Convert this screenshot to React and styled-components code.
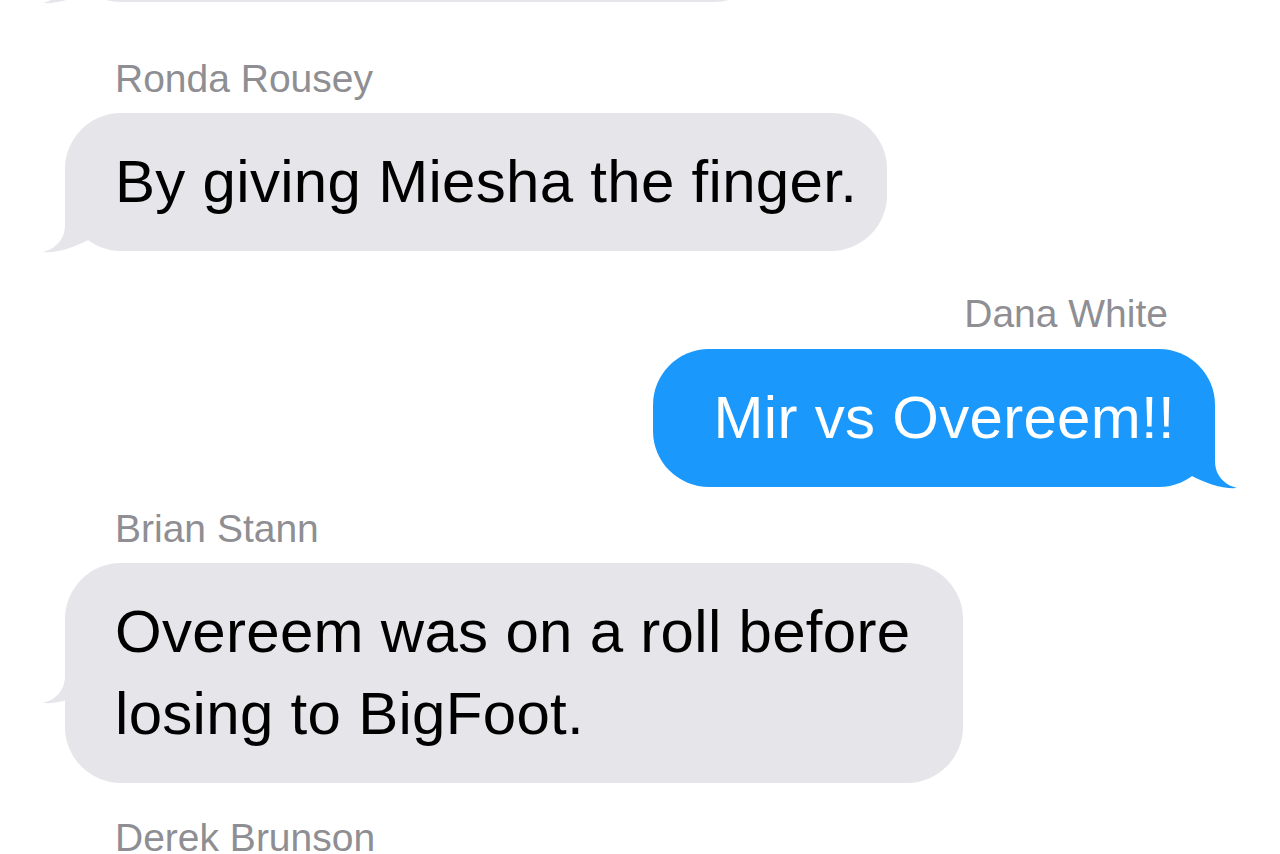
import React from "react";
import styled, { createGlobalStyle } from "styled-components";

const GlobalStyle = createGlobalStyle`
  html, body { margin: 0; padding: 0; background: #ffffff; }
  body {
    font-family: "Liberation Sans", Arial, Helvetica, sans-serif;
    -webkit-font-smoothing: antialiased;
  }
`;

const Viewport = styled.div`
  height: 100vh;
  overflow: hidden;
  background: #ffffff;
`;

/* the conversation is scrolled: the previous bubble sits just above the top edge */
const Thread = styled.div`
  display: flex;
  flex-direction: column;
  padding: 0 65px;
  margin-top: -136px;
`;

const Group = styled.div`
  display: flex;
  flex-direction: column;
  align-items: ${(p) => (p.$sent ? "flex-end" : "flex-start")};
  margin-top: ${(p) => p.$mt}px;
`;

const Sender = styled.div`
  font-size: 39px;
  line-height: 46px;
  color: #8e8e93;
  padding: 0 47px 0 50px;
  margin-bottom: 11.5px;
  white-space: nowrap;
`;

const Bubble = styled.div`
  position: relative;
  box-sizing: border-box;
  max-width: 898px;
  width: ${(p) => (p.$width ? `${p.$width}px` : "auto")};
  padding: ${(p) => (p.$sent ? "28px 40px 28px 60px" : "28px 30px 28px 50px")};
  border-radius: 56px;
  background: ${(p) => (p.$sent ? "#1a98fc" : "#e5e5ea")};
  color: ${(p) => (p.$sent ? "#ffffff" : "#000000")};
  font-size: 60px;
  line-height: 82px;
  letter-spacing: 0.3px;
`;

const Text = styled.span`
  position: relative;
  z-index: 1;
`;

const TailSvg = styled.svg`
  position: absolute;
  bottom: ${(p) => -2 + (p.$offset || 0)}px;
  ${(p) => (p.$sent ? "right: -22px; transform: scaleX(-1);" : "left: -22px;")}
  width: 48px;
  height: 62px;
  overflow: visible;
`;

function Tail({ sent, offset, color }) {
  return (
    <TailSvg $sent={sent} $offset={offset} viewBox="0 0 48 62" aria-hidden="true">
      <path
        d="M22 0 L22 34 C22 49 12 58 0 61 C14 62 30 57 47 48 L47 0 Z"
        fill={color}
      />
    </TailSvg>
  );
}

function Message({ sent, width, tailOffset, children }) {
  return (
    <Bubble $sent={sent} $width={width}>
      <Tail sent={sent} offset={tailOffset} color={sent ? "#1a98fc" : "#e5e5ea"} />
      <Text>{children}</Text>
    </Bubble>
  );
}

export default function App() {
  return (
    <>
      <GlobalStyle />
      <Viewport>
        <Thread>
          <Group $mt={0}>
            <Message width={705}>{"\u00a0"}</Message>
          </Group>

          <Group $mt={53.5}>
            <Sender>Ronda Rousey</Sender>
            <Message>By giving Miesha the finger.</Message>
          </Group>

          <Group $mt={40} $sent>
            <Sender>Dana White</Sender>
            <Message sent>Mir vs Overeem!!</Message>
          </Group>

          <Group $mt={19}>
            <Sender>Brian Stann</Sender>
            <Message tailOffset={81}>
              Overeem was on a roll before losing to BigFoot.
            </Message>
          </Group>

          <Group $mt={32}>
            <Sender>Derek Brunson</Sender>
          </Group>
        </Thread>
      </Viewport>
    </>
  );
}
